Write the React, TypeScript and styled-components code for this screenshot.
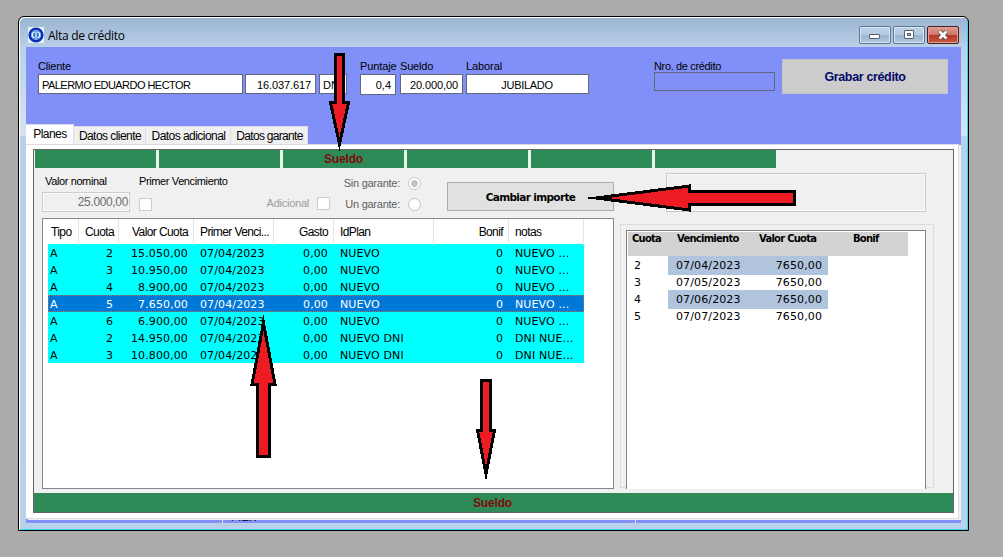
import React from 'react';
import styled, { createGlobalStyle } from 'styled-components';

const GlobalStyle = createGlobalStyle`
  * { box-sizing: border-box; }
  html, body, #root { height: 100%; }
  body {
    margin: 0;
    overflow: hidden;
    background: #ababab;
    font-family: "Liberation Sans", Arial, sans-serif;
    font-size: 11px;
    color: #000;
    white-space: pre;
  }
`;

const Desktop = styled.div`
  position: relative;
  width: 1003px;
  height: 557px;
  padding: 16px 0 0 18px;
  background: #ababab;
`;

const Frame = styled.div`
  width: 951px;
  height: 515px;
  padding: 0 6px 6px;
  border: 1px solid #000;
  border-radius: 6px 6px 0 0;
  background: linear-gradient(#9ab3d0 0, #b9d1e9 31px, #c3d7ea 60px, #d6e4f3 118px, #b8d0ea 120px, #b9d1ea 100%);
  box-shadow: inset 1px 1px 0 #fff, inset -1px -1px 0 #35d3f0;
  display: flex;
  flex-direction: column;
`;

const TitleBar = styled.div`
  height: 30px;
  flex: none;
  display: flex;
  align-items: flex-start;
  padding: 9px 3px 0 3px;
`;

const AppIcon = styled.svg`
  width: 16px;
  height: 16px;
  margin-top: 1px;
`;

const Title = styled.div`
  flex: 1;
  margin: 1px 0 0 4px;
  font: 12px/17px "Open Sans", sans-serif;
  letter-spacing: -0.3px;
`;

const CaptionButton = styled.div<{ $close?: boolean }>`
  width: 32px;
  height: 18px;
  margin-left: 2px;
  border: 1px solid ${p => (p.$close ? '#4b1c1c' : '#5f7690')};
  border-radius: 2px;
  box-shadow: inset 0 0 0 1px ${p => (p.$close ? '#e0a298' : '#d7e6f5')};
  background: ${p =>
    p.$close
      ? 'linear-gradient(#dd9c90 0, #cf7568 48%, #b93626 52%, #c95b42 100%)'
      : 'linear-gradient(#bdd2e8 0, #b3cae2 48%, #99b5d2 52%, #b0c9e2 100%)'};
  display: flex;
  align-items: center;
  justify-content: center;
`;

const Client = styled.div`
  width: 935px;
  height: 476px;
  margin-left: 1px;
  background: #8090f8;
  display: flex;
  flex-direction: column;
`;

const Header = styled.div`
  height: 77px;
  flex: none;
  display: flex;
  align-items: flex-start;
  padding: 12px 0 0 12px;
`;

const Field = styled.div<{ $w: number; $gap?: number }>`
  width: ${p => p.$w}px;
  margin-left: ${p => p.$gap ?? 0}px;
`;

const FieldLabel = styled.div<{ $h?: number; $ls?: number }>`
  height: ${p => p.$h ?? 15}px;
  line-height: 15px;
  letter-spacing: ${p => p.$ls ?? -0.2}px;
`;

const Box = styled.div<{ $align?: string; $h?: number; $clear?: boolean; $ls?: number }>`
  height: ${p => p.$h ?? 20}px;
  border: 1px solid #62667e;
  background: ${p => (p.$clear ? 'transparent' : '#fff')};
  padding: 0 4px 0 3px;
  font-size: 11px;
  line-height: 20px;
  letter-spacing: ${p => p.$ls ?? 0}px;
  text-align: ${p => p.$align ?? 'left'};
  overflow: hidden;
`;

const SaveButton = styled.div`
  width: 166px;
  height: 35px;
  margin-left: 7px;
  background: #ccc;
  border: 1px solid #c3c3c8;
  color: #000a68;
  font-size: 12.5px;
  font-weight: bold;
  line-height: 34px;
  letter-spacing: -0.35px;
  text-align: center;
`;

const Tabs = styled.div`
  height: 20px;
  flex: none;
  display: flex;
  align-items: flex-end;
`;

const Tab = styled.div<{ $w: number; $active?: boolean; $ls?: number }>`
  width: ${p => p.$w}px;
  height: ${p => (p.$active ? 20 : 18)}px;
  background: ${p => (p.$active ? '#fff' : '#f0f0f0')};
  border: solid #dcdce4;
  border-width: 1px 1px 0 0;
  padding-left: 1px;
  font-size: 12px;
  line-height: ${p => (p.$active ? 18 : 19)}px;
  letter-spacing: ${p => p.$ls ?? -0.55}px;
  text-align: center;
`;

const Page = styled.div`
  height: 375px;
  flex: none;
  margin: 0 2px 1px 0;
  padding: 4px 4px 4px 7px;
  border: solid #dcdce4;
  border-width: 1px 1px 1px 0;
  box-shadow: 2px 1px 0 #f0f0f0;
  background: #fff;
`;

const Panel = styled.div`
  width: 921px;
  height: 364px;
  border: 1px solid #646464;
  background: #f0f0f0;
  display: flex;
  flex-direction: column;
`;

const Segments = styled.div`
  width: 742px;
  height: 18px;
  flex: none;
  margin-left: 1px;
  display: flex;
  gap: 3px;
  background: #e8f6ea;
`;

const Segment = styled.div`
  width: 121px;
  background: #2e8b57;
  color: #7d0c0c;
  font-size: 12px;
  font-weight: bold;
  line-height: 18px;
  letter-spacing: -0.15px;
  text-align: center;
`;

const Footer = styled(Segment)`
  width: auto;
  height: 19px;
  line-height: 20px;
  padding-right: 2px;
`;

const Body = styled.div`
  height: 325px;
  flex: none;
  display: flex;
`;

const Left = styled.div`
  width: 580px;
  padding-left: 8px;
`;

const Controls = styled.div`
  height: 50px;
  display: flex;
  align-items: flex-start;
`;

const Stack = styled.div<{ $w: number; $top?: number; $gap?: number }>`
  width: ${p => p.$w}px;
  padding-top: ${p => p.$top ?? 7}px;
  display: flex;
  flex-direction: column;
  gap: ${p => p.$gap ?? 0}px;
`;

const Label = styled.div<{ $h?: number; $pad?: number }>`
  height: ${p => p.$h ?? 17}px;
  padding-left: ${p => p.$pad ?? 0}px;
  line-height: 13px;
  letter-spacing: -0.38px;
`;

const Amount = styled.div`
  width: 88px;
  height: 20px;
  border: 1px solid #ccc;
  box-shadow: inset 0 0 0 1px #fafafa;
  padding-right: 1px;
  color: #6d6d6d;
  font-size: 12px;
  line-height: 18px;
  letter-spacing: -0.35px;
  text-align: right;
`;

const Check = styled.div`
  width: 13px;
  height: 13px;
  flex: none;
  border: 1px solid #ccc;
  background: #fff;
`;

const Option = styled.div<{ $color: string }>`
  height: 14px;
  display: flex;
  align-items: center;
  justify-content: flex-end;
  gap: 8px;
  color: ${p => p.$color};
  letter-spacing: -0.25px;
`;

const Radio = styled.div<{ $on?: boolean }>`
  width: 13px;
  height: 13px;
  flex: none;
  border: 1px solid #c4c4c4;
  border-radius: 50%;
  background: ${p => (p.$on ? 'radial-gradient(circle, #c3c3c3 0 3px, #fff 4px)' : '#fff')};
`;

const ChangeButton = styled.div`
  width: 167px;
  height: 29px;
  margin: 14px 0 0 26px;
  border: 1px solid #adadad;
  background: #e1e1e1;
  font: bold 10.5px/29px "DejaVu Sans", sans-serif;
  letter-spacing: -0.65px;
  text-align: center;
`;

const List = styled.div`
  width: 572px;
  height: 271px;
  border: 1px solid #828790;
  background: #fff;
  padding-left: 5px;
`;

const COLS = '31px 40px 75px 80px 60px 100px 75px 75px';

const HeadRow = styled.div`
  width: 536px;
  height: 25px;
  display: grid;
  grid-template-columns: ${COLS};
`;

const HeadCell = styled.div<{ $right?: boolean; $first?: boolean }>`
  padding: 0 ${p => (p.$right ? 5 : 0)}px 0 ${p => (p.$first ? 3 : 6)}px;
  border-right: 1px solid #e5e5e5;
  font-size: 12px;
  line-height: 26px;
  letter-spacing: -0.6px;
  text-align: ${p => (p.$right ? 'right' : 'left')};
`;

const Row = styled.div<{ $selected?: boolean }>`
  width: 536px;
  height: 17px;
  display: grid;
  grid-template-columns: ${COLS};
  background: ${p => (p.$selected ? '#0078d7' : '#00ffff')};
  color: ${p => (p.$selected ? '#fff' : '#000')};
  outline: ${p => (p.$selected ? '1px dotted #b07a48' : 'none')};
  outline-offset: -1px;
`;

const Cell = styled.div<{ $right?: boolean; $first?: boolean }>`
  padding: 0 ${p => (p.$right ? 6 : 0)}px 0 ${p => (p.$first ? 2 : 6)}px;
  font: 11px/19px "DejaVu Sans", sans-serif;
  letter-spacing: 0.12px;
  text-align: ${p => (p.$right ? 'right' : 'left')};
`;

const Right = styled.div`
  padding: 5px 0 0 6px;
`;

const InfoBox = styled.div`
  width: 260px;
  height: 39px;
  margin: 0 0 12px 46px;
  border: 1px solid #c8c8c8;
  box-shadow: inset 0 0 0 1px #fafafa;
`;

const Group = styled.div`
  width: 314px;
  height: 264px;
  padding: 5px 0 0 5px;
  border: 1px solid #dcdcdc;
`;

const Schedule = styled.div`
  width: 300px;
  height: 259px;
  padding: 1px;
  border: solid #828282;
  border-width: 1px 1px 0;
  background: #fff;
`;

const ScheduleHead = styled.div`
  width: 280px;
  height: 24px;
  display: grid;
  grid-template-columns: 40px 80px 80px 80px;
  background: #d3d3d3;
  font: bold 10px/14px "DejaVu Sans", sans-serif;
  letter-spacing: -0.75px;
`;

const ScheduleTitle = styled.div<{ $pad: number }>`
  padding-left: ${p => p.$pad}px;
`;

const ScheduleRow = styled.div`
  width: 200px;
  height: 17px;
  display: grid;
  grid-template-columns: 40px 80px 80px;
  font: 11px/19px "DejaVu Sans", sans-serif;
  letter-spacing: 0.12px;
`;

const ScheduleCell = styled.div<{ $shade?: boolean; $pad?: number; $right?: boolean }>`
  padding-left: ${p => p.$pad ?? 0}px;
  padding-right: ${p => (p.$right ? 6 : 0)}px;
  background: ${p => (p.$shade ? '#b0c4de' : 'transparent')};
  text-align: ${p => (p.$right ? 'right' : 'left')};
`;

const Status = styled.div`
  height: 3px;
  flex: none;
  display: flex;
  overflow: hidden;
`;

const StatusCell = styled.div<{ $w: number }>`
  width: ${p => p.$w}px;
  padding-left: 8px;
  border-right: 1px solid #dfe3ff;
  line-height: 14px;
  margin-top: -10px;
  height: 14px;
`;

const Overlay = styled.svg`
  position: absolute;
  left: 0;
  top: 0;
  pointer-events: none;
`;

const columns: [string, boolean][] = [
  ['Tipo', false], ['Cuota', true], ['Valor Cuota', true], ['Primer Venci...', false],
  ['Gasto', true], ['IdPlan', false], ['Bonif', true], ['notas', false],
];

const plans: [number, string, string, string][] = [
  [2, '15.050,00', 'NUEVO', 'NUEVO ...'],
  [3, '10.950,00', 'NUEVO', 'NUEVO ...'],
  [4, '8.900,00', 'NUEVO', 'NUEVO ...'],
  [5, '7.650,00', 'NUEVO', 'NUEVO ...'],
  [6, '6.900,00', 'NUEVO', 'NUEVO ...'],
  [2, '14.950,00', 'NUEVO DNI', 'DNI NUE...'],
  [3, '10.800,00', 'NUEVO DNI', 'DNI NUE...'],
];

const schedule: [number, string][] = [
  [2, '07/04/2023'], [3, '07/05/2023'], [4, '07/06/2023'], [5, '07/07/2023'],
];

const arrows = [
  '335,54 343.5,54 343.5,102.5 348.5,102.5 339.5,144 330.5,102.5 335,102.5',
  '794.5,191.5 794.5,204.5 689.5,204.5 689.5,210 596,198 689.5,186 689.5,191.5',
  '263.5,323 275,384.5 269.5,384.5 269.5,456.5 257.5,456.5 257.5,384.5 252,384.5',
  '481.5,380.5 490.5,380.5 490.5,430.5 494.5,430.5 486,474 477.5,430.5 481.5,430.5',
];

export default function App() {
  return (
    <Desktop>
      <GlobalStyle />
      <Frame>
        <TitleBar>
          <AppIcon viewBox="0 0 16 16">
            <rect width="16" height="16" fill="#e6f0fb" />
            <circle cx="8" cy="8" r="6.3" fill="#cfe4fb" stroke="#0b2bb4" strokeWidth="2.6" />
            <circle cx="8" cy="8" r="4.6" fill="#2f7be0" />
            <path d="M6.6 5a3.1 3.1 0 0 0 0 6M9.4 5a3.1 3.1 0 0 1 0 6M8 4.6v6.8" fill="none" stroke="#fff" strokeWidth="1.1" />
          </AppIcon>
          <Title>Alta de crédito</Title>
          <CaptionButton>
            <svg width="12" height="10"><rect x="0.5" y="4.5" width="10" height="4" rx="0.5" fill="#fff" stroke="#56606c" /></svg>
          </CaptionButton>
          <CaptionButton>
            <svg width="12" height="10">
              <rect x="1.5" y="0.5" width="9" height="8" rx="0.5" fill="#fff" stroke="#56606c" />
              <rect x="4.5" y="3.5" width="3" height="2" fill="#a5bdd6" stroke="#56606c" />
            </svg>
          </CaptionButton>
          <CaptionButton $close>
            <svg width="12" height="10">
              <path d="M2.6 1.5L9.4 8.5M9.4 1.5L2.6 8.5" stroke="#56474d" strokeWidth="4.4" />
              <path d="M2.6 1.5L9.4 8.5M9.4 1.5L2.6 8.5" stroke="#fff" strokeWidth="2.6" />
            </svg>
          </CaptionButton>
        </TitleBar>
        <Client>
          <Header>
            <Field $w={205}>
              <FieldLabel>Cliente</FieldLabel>
              <Box $ls={-0.54}>PALERMO EDUARDO HECTOR</Box>
            </Field>
            <Field $w={71} $gap={2}>
              <FieldLabel />
              <Box $align="right" $ls={-0.1}>16.037.617</Box>
            </Field>
            <Field $w={28} $gap={3}>
              <FieldLabel />
              <Box>DNI</Box>
            </Field>
            <Field $w={36} $gap={13}>
              <FieldLabel $ls={-0.1}>Puntaje</FieldLabel>
              <Box $align="right" $h={21}>0,4</Box>
            </Field>
            <Field $w={63} $gap={4}>
              <FieldLabel>Sueldo</FieldLabel>
              <Box $align="right" $ls={-0.1}>20.000,00</Box>
            </Field>
            <Field $w={123} $gap={3}>
              <FieldLabel $ls={-0.1}>Laboral</FieldLabel>
              <Box $align="center" $ls={-0.3}>JUBILADO</Box>
            </Field>
            <Field $w={121} $gap={65}>
              <FieldLabel $h={13} $ls={-0.35}>Nro. de crédito</FieldLabel>
              <Box $clear $h={19} />
            </Field>
            <SaveButton>Grabar crédito</SaveButton>
          </Header>
          <Tabs>
            <Tab $w={48} $active>Planes</Tab>
            <Tab $w={72}>Datos cliente</Tab>
            <Tab $w={85}>Datos adicional</Tab>
            <Tab $w={77} $ls={-0.7}>Datos garante</Tab>
          </Tabs>
          <Page>
            <Panel>
              <Segments>
                <Segment /><Segment /><Segment>Sueldo</Segment><Segment /><Segment /><Segment />
              </Segments>
              <Body>
                <Left>
                  <Controls>
                    <Stack $w={97}>
                      <Label $pad={3}>Valor nominal</Label>
                      <Amount>25.000,00</Amount>
                    </Stack>
                    <Stack $w={100}>
                      <Label $h={23}>Primer Vencimiento</Label>
                      <Check />
                    </Stack>
                    <Stack $w={91} $top={28}>
                      <Option $color="#9d9d9d">Adicional<Check /></Option>
                    </Stack>
                    <Stack $w={91} $top={8} $gap={7}>
                      <Option $color="#5f5f5f">Sin garante:<Radio $on /></Option>
                      <Option $color="#5f5f5f">Un garante:<Radio /></Option>
                    </Stack>
                    <ChangeButton>Cambiar importe</ChangeButton>
                  </Controls>
                  <List>
                    <HeadRow>
                      {columns.map(([name, right], i) => (
                        <HeadCell key={name} $right={right} $first={i === 0}>{name}</HeadCell>
                      ))}
                    </HeadRow>
                    {plans.map(([n, value, plan, note], i) => (
                      <Row key={i} $selected={i === 3}>
                        <Cell $first>A</Cell>
                        <Cell $right>{n}</Cell>
                        <Cell $right>{value}</Cell>
                        <Cell>07/04/2023</Cell>
                        <Cell $right>0,00</Cell>
                        <Cell>{plan}</Cell>
                        <Cell $right>0</Cell>
                        <Cell>{note}</Cell>
                      </Row>
                    ))}
                  </List>
                </Left>
                <Right>
                  <InfoBox />
                  <Group>
                    <Schedule>
                      <ScheduleHead>
                        <ScheduleTitle $pad={4}>Cuota</ScheduleTitle>
                        <ScheduleTitle $pad={9}>Vencimiento</ScheduleTitle>
                        <ScheduleTitle $pad={11}>Valor Cuota</ScheduleTitle>
                        <ScheduleTitle $pad={25}>Bonif</ScheduleTitle>
                      </ScheduleHead>
                      {schedule.map(([n, date], i) => (
                        <ScheduleRow key={n}>
                          <ScheduleCell $pad={6}>{n}</ScheduleCell>
                          <ScheduleCell $pad={8} $shade={i % 2 === 0}>{date}</ScheduleCell>
                          <ScheduleCell $right $shade={i % 2 === 0}>7650,00</ScheduleCell>
                        </ScheduleRow>
                      ))}
                    </Schedule>
                  </Group>
                </Right>
              </Body>
              <Footer>Sueldo</Footer>
            </Panel>
          </Page>
          <Status>
            <StatusCell $w={197} />
            <StatusCell $w={413}>PIER</StatusCell>
          </Status>
        </Client>
      </Frame>
      <Overlay width="1003" height="557" shapeRendering="crispEdges">
        {arrows.map(points => (
          <polygon key={points} points={points} fill="#ed1c24" stroke="#000" strokeWidth="3" strokeMiterlimit="20" />
        ))}
      </Overlay>
    </Desktop>
  );
}
